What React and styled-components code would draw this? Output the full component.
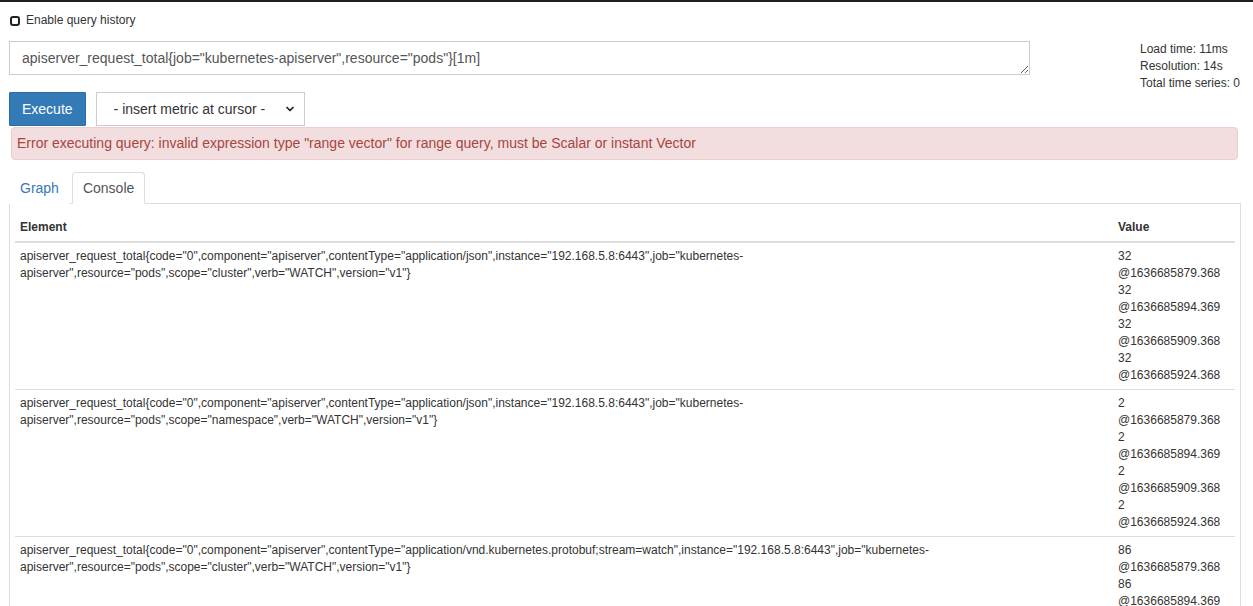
import React from "react";
import styled, { createGlobalStyle } from "styled-components";
import { ChevronDown } from "lucide-react";

const GlobalStyle = createGlobalStyle`
  * { box-sizing: border-box; }
  html, body { margin: 0; padding: 0; background: #fff; }
  body {
    font-family: "Liberation Sans", Arial, sans-serif;
    color: #333;
    font-size: 12px;
    line-height: 1.42857;
    border-top: 2px solid #1f1f1f;
  }
`;

const Page = styled.div`
  padding: 0 12px 0 9px;
`;

const HistoryRow = styled.label`
  display: flex;
  align-items: center;
  gap: 6px;
  height: 17px;
  margin-top: 10px;
  margin-bottom: 12px;
  padding-left: 1px;
  font-size: 12px;
  color: #333;
`;

const Check = styled.input.attrs({ type: "checkbox" })`
  appearance: none;
  margin: 0;
  width: 10px;
  height: 10px;
  border: 2px solid #222;
  border-radius: 3px;
  background: #fff;
`;

const QueryRow = styled.div`
  display: grid;
  grid-template-columns: 1021px 1fr;
  column-gap: 110px;
  height: 51px;
`;

const QueryInput = styled.textarea`
  height: 34px;
  width: 100%;
  border: 1px solid #ccc;
  border-radius: 0;
  padding: 6px 12px;
  font-family: "Liberation Sans", Arial, sans-serif;
  font-size: 14px;
  line-height: 20px;
  color: #555;
  resize: vertical;
  overflow: hidden;
  outline: none;
`;

const Stats = styled.div`
  margin-top: 0;
  font-size: 12px;
  line-height: 17px;
  color: #333;
  white-space: nowrap;
`;

const ActionRow = styled.div`
  display: flex;
  align-items: flex-start;
  gap: 10px;
  height: 35px;
`;

const ExecuteButton = styled.button`
  height: 34px;
  padding: 0 12px;
  border: 1px solid #2e6da4;
  border-radius: 1px;
  background: #337ab7;
  color: #fff;
  font-family: "Liberation Sans", Arial, sans-serif;
  font-size: 14px;
`;

const SelectWrap = styled.div`
  position: relative;
  width: 209px;
  height: 34px;
`;

const MetricSelect = styled.select`
  appearance: none;
  width: 100%;
  height: 100%;
  border: 1px solid #ccc;
  border-radius: 0;
  background: #fff;
  padding: 0 0 0 17px;
  font-family: "Liberation Sans", Arial, sans-serif;
  font-size: 14px;
  color: #333;
  outline: none;
`;

const SelectChevron = styled(ChevronDown)`
  position: absolute;
  right: 9px;
  top: 11px;
  pointer-events: none;
  color: #222;
`;

const Alert = styled.div`
  margin: 0 3px 0 2px;
  padding: 6px 5px;
  height: 33px;
  border: 1px solid #ebccd1;
  border-radius: 4px;
  background: #f2dede;
  color: #a94442;
  font-size: 14px;
  line-height: 19px;
`;

const TabNav = styled.ul`
  display: flex;
  list-style: none;
  margin: 12px 0 0;
  padding: 0;
  border-bottom: 1px solid #ddd;
`;

const Tab = styled.li`
  margin: 0 2px -1px 0;
  padding: 5px 10px;
  line-height: 20px;
  font-size: 14px;
  border: 1px solid ${(p) => (p.$active ? "#ddd" : "transparent")};
  border-bottom-color: ${(p) => (p.$active ? "#fff" : "transparent")};
  border-radius: 4px 4px 0 0;
  background: #fff;
  color: ${(p) => (p.$active ? "#555" : "#337ab7")};
`;

const TabPanel = styled.div`
  border: 1px solid #ddd;
  border-top: none;
  padding: 10px 5px 0;
`;

const Table = styled.table`
  width: 100%;
  border-collapse: collapse;
  table-layout: fixed;
  font-size: 12px;
  line-height: 17px;
`;

const ValueCol = styled.col`
  width: 122px;
`;

const HeadCell = styled.th`
  text-align: left;
  font-weight: bold;
  padding: 5px;
  border-bottom: 2px solid #ddd;
`;

const Row = styled.tr`
  & + & > td { border-top: 1px solid #ddd; }
`;

const Cell = styled.td`
  padding: 5px;
  vertical-align: top;
`;

const ValueLine = styled.div``;

const rows = [
  {
    metric:
      'apiserver_request_total{code="0",component="apiserver",contentType="application/json",instance="192.168.5.8:6443",job="kubernetes-apiserver",resource="pods",scope="cluster",verb="WATCH",version="v1"}',
    v: "32",
  },
  {
    metric:
      'apiserver_request_total{code="0",component="apiserver",contentType="application/json",instance="192.168.5.8:6443",job="kubernetes-apiserver",resource="pods",scope="namespace",verb="WATCH",version="v1"}',
    v: "2",
  },
  {
    metric:
      'apiserver_request_total{code="0",component="apiserver",contentType="application/vnd.kubernetes.protobuf;stream=watch",instance="192.168.5.8:6443",job="kubernetes-apiserver",resource="pods",scope="cluster",verb="WATCH",version="v1"}',
    v: "86",
  },
];

const stamps = ["1636685879.368", "1636685894.369", "1636685909.368", "1636685924.368"];

export default function App() {
  return (
    <>
      <GlobalStyle />
      <Page>
        <HistoryRow>
          <Check />
          Enable query history
        </HistoryRow>
        <QueryRow>
          <QueryInput
            defaultValue={'apiserver_request_total{job="kubernetes-apiserver",resource="pods"}[1m]'}
          />
          <Stats>
            <div>Load time: 11ms</div>
            <div>Resolution: 14s</div>
            <div>Total time series: 0</div>
          </Stats>
        </QueryRow>
        <ActionRow>
          <ExecuteButton>Execute</ExecuteButton>
          <SelectWrap>
            <MetricSelect defaultValue="">
              <option value="">- insert metric at cursor -</option>
            </MetricSelect>
            <SelectChevron size={12} strokeWidth={3.5} />
          </SelectWrap>
        </ActionRow>
        <Alert>
          Error executing query: invalid expression type "range vector" for range query, must be Scalar or instant Vector
        </Alert>
        <TabNav>
          <Tab>Graph</Tab>
          <Tab $active>Console</Tab>
        </TabNav>
        <TabPanel>
          <Table>
            <colgroup>
              <col />
              <ValueCol />
            </colgroup>
            <thead>
              <tr>
                <HeadCell>Element</HeadCell>
                <HeadCell>Value</HeadCell>
              </tr>
            </thead>
            <tbody>
              {rows.map((r, i) => (
                <Row key={i}>
                  <Cell>{r.metric}</Cell>
                  <Cell>
                    {stamps.map((s) => (
                      <ValueLine key={s}>
                        {r.v} @{s}
                      </ValueLine>
                    ))}
                  </Cell>
                </Row>
              ))}
            </tbody>
          </Table>
        </TabPanel>
      </Page>
    </>
  );
}
